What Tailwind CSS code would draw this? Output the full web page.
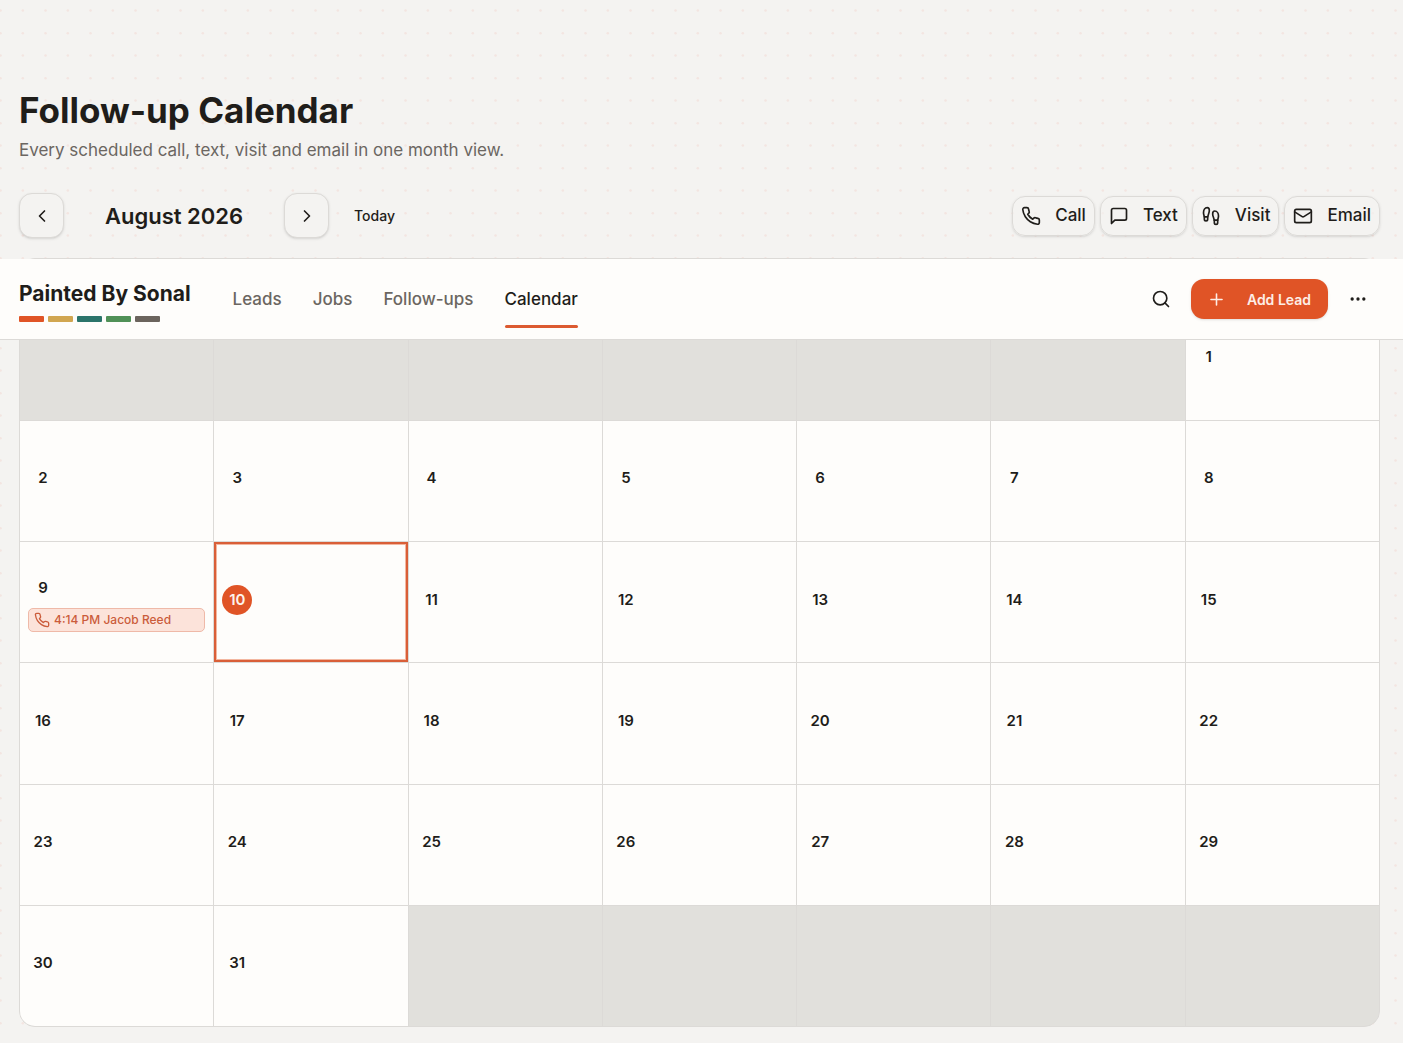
<!DOCTYPE html>
<html lang="en">
<head>
  <meta charset="UTF-8">
  <meta name="viewport" content="width=device-width, initial-scale=1.0">
  <title>Follow-up Calendar</title>
  <script src="https://cdn.jsdelivr.net/npm/@tailwindcss/browser@4"></script>
</head>
<body class="relative min-h-screen bg-[#f4f3f1] font-['Inter',sans-serif] text-[#1f1d1a]">
  <!-- Dotted page background -->
  <svg class="absolute inset-0 -z-10 h-full w-full" aria-hidden="true">
    <defs>
      <pattern id="dots" width="45" height="45" patternUnits="userSpaceOnUse">
        <g fill="#f3e5e1">
          <circle cx="0.5" cy="10.5" r="1.3" />
          <circle cx="22.8" cy="10.5" r="1.3" />
          <circle cx="45.5" cy="10.5" r="1.3" />
          <circle cx="0.5" cy="33.2" r="1.3" />
          <circle cx="22.8" cy="33.2" r="1.3" />
          <circle cx="45.5" cy="33.2" r="1.3" />
        </g>
      </pattern>
    </defs>
    <rect width="100%" height="100%" fill="url(#dots)" />
  </svg>

  <!-- Icon sprite -->
  <svg class="hidden">
    <symbol id="i-phone" viewBox="0 0 24 24"><path d="M22 16.92v3a2 2 0 0 1-2.18 2 19.79 19.79 0 0 1-8.63-3.07 19.5 19.5 0 0 1-6-6 19.79 19.79 0 0 1-3.07-8.67A2 2 0 0 1 4.11 2h3a2 2 0 0 1 2 1.72 12.84 12.84 0 0 0 .7 2.81 2 2 0 0 1-.45 2.11L8.09 9.91a16 16 0 0 0 6 6l1.27-1.27a2 2 0 0 1 2.11-.45 12.84 12.84 0 0 0 2.81.7A2 2 0 0 1 22 16.92z" /></symbol>
    <symbol id="i-text" viewBox="0 0 24 24"><path d="M21 15a2 2 0 0 1-2 2H7l-4 4V5a2 2 0 0 1 2-2h14a2 2 0 0 1 2 2z" /></symbol>
    <symbol id="i-visit" viewBox="0 0 24 24"><path d="M4 16v-2.38C4 11.5 2.97 10.5 3 8c.03-2.72 1.49-6 4.5-6C9.37 2 10 3.8 10 5.5c0 3.11-2 5.66-2 8.68V16a2 2 0 1 1-4 0Z" /><path d="M20 20v-2.38c0-2.12 1.03-3.12 1-5.62-.03-2.72-1.49-6-4.5-6C14.63 6 14 7.8 14 9.5c0 3.11 2 5.66 2 8.68V20a2 2 0 1 0 4 0Z" /><path d="M16 17h4" /><path d="M4 13h4" /></symbol>
    <symbol id="i-mail" viewBox="0 0 24 24"><rect width="20" height="16" x="2" y="4" rx="2" /><path d="m22 7-8.97 5.7a1.94 1.94 0 0 1-2.06 0L2 7" /></symbol>
    <symbol id="i-left" viewBox="0 0 24 24"><path d="m15 18-6-6 6-6" /></symbol>
    <symbol id="i-right" viewBox="0 0 24 24"><path d="m9 18 6-6-6-6" /></symbol>
    <symbol id="i-search" viewBox="0 0 24 24"><circle cx="11" cy="11" r="8" /><path d="m21 21-4.3-4.3" /></symbol>
    <symbol id="i-plus" viewBox="0 0 24 24"><path d="M5 12h14M12 5v14" /></symbol>
    <symbol id="i-more" viewBox="0 0 24 24"><circle cx="12" cy="12" r="1" /><circle cx="19" cy="12" r="1" /><circle cx="5" cy="12" r="1" /></symbol>
  </svg>

  <main class="pt-[88px] pb-4">
    <div class="px-[19px]">
      <h1 class="text-[35px] leading-[44px] font-bold">Follow-up Calendar</h1>
      <p class="mt-1 text-[17px] leading-7 text-[#6b6661]">Every scheduled call, text, visit and email in one month view.</p>
    </div>

    <!-- Month controls -->
    <div class="mt-[29px] flex items-center justify-between pr-[23px] pl-[19px]">
      <div class="flex items-center">
        <button aria-label="Previous month" class="flex size-[45px] items-center justify-center rounded-[13px] border border-[#dcdad7] bg-[#f4f3f1] shadow-sm">
          <svg class="size-5 fill-none stroke-current stroke-2" stroke-linecap="round" stroke-linejoin="round"><use href="#i-left" /></svg>
        </button>
        <h2 class="w-[220px] text-center text-[22px] leading-7 font-semibold">August 2026</h2>
        <button aria-label="Next month" class="flex size-[45px] items-center justify-center rounded-[13px] border border-[#dcdad7] bg-[#f4f3f1] shadow-sm">
          <svg class="size-5 fill-none stroke-current stroke-2" stroke-linecap="round" stroke-linejoin="round"><use href="#i-right" /></svg>
        </button>
        <button class="ml-[9px] px-4 text-[14px] leading-5 font-medium">Today</button>
      </div>
      <div class="flex gap-[5px]">
        <button class="flex h-10 items-center gap-[14px] rounded-[13px] border border-[#dcdad7] bg-[#f4f3f1]/60 px-2 text-[17px] font-medium shadow-sm"><svg class="size-5 fill-none stroke-current stroke-2" stroke-linecap="round" stroke-linejoin="round"><use href="#i-phone" /></svg>Call</button>
        <button class="flex h-10 items-center gap-[14px] rounded-[13px] border border-[#dcdad7] bg-[#f4f3f1]/60 px-2 text-[17px] font-medium shadow-sm"><svg class="size-5 fill-none stroke-current stroke-2" stroke-linecap="round" stroke-linejoin="round"><use href="#i-text" /></svg>Text</button>
        <button class="flex h-10 items-center gap-[14px] rounded-[13px] border border-[#dcdad7] bg-[#f4f3f1]/60 px-2 text-[17px] font-medium shadow-sm"><svg class="size-5 fill-none stroke-current stroke-2" stroke-linecap="round" stroke-linejoin="round"><use href="#i-visit" /></svg>Visit</button>
        <button class="flex h-10 items-center gap-[14px] rounded-[13px] border border-[#dcdad7] bg-[#f4f3f1]/60 px-2 text-[17px] font-medium shadow-sm"><svg class="size-5 fill-none stroke-current stroke-2" stroke-linecap="round" stroke-linejoin="round"><use href="#i-mail" /></svg>Email</button>
      </div>
    </div>

    <div class="relative mt-5">
      <!-- App bar, floats over the top of the calendar -->
      <header class="absolute inset-x-0 top-px z-10 flex h-[81px] items-center border-b border-[#dcdad7] bg-[#fefdfb] pr-[25px] pl-[19px]">
        <a href="#" class="block pt-[3px]">
          <span class="block text-[21px] leading-7 font-bold">Painted By Sonal</span>
          <span class="mt-2 flex gap-1">
            <span class="h-[6px] w-[25px] rounded-[1px] bg-[#e05426]"></span>
            <span class="h-[6px] w-[25px] rounded-[1px] bg-[#d1a650]"></span>
            <span class="h-[6px] w-[25px] rounded-[1px] bg-[#2b746a]"></span>
            <span class="h-[6px] w-[25px] rounded-[1px] bg-[#509157]"></span>
            <span class="h-[6px] w-[25px] rounded-[1px] bg-[#6b645d]"></span>
          </span>
        </a>
        <nav class="ml-[42px] flex gap-[31px] text-[17px] leading-6 font-medium text-[#6b6661]">
          <a href="#" class="pt-[17px] pb-[17px]">Leads</a>
          <a href="#" class="pt-[17px] pb-[17px]">Jobs</a>
          <a href="#" class="pt-[17px] pb-[17px]">Follow-ups</a>
          <a href="#" class="pt-[17px] text-[#1f1d1a]">Calendar<span class="mt-[14px] block h-[3px] rounded-full bg-[#dc5a30]"></span></a>
        </nav>
        <div class="ml-auto flex items-center">
          <button aria-label="Search" class="flex size-10 items-center justify-center"><svg class="size-5 fill-none stroke-current stroke-2" stroke-linecap="round" stroke-linejoin="round"><use href="#i-search" /></svg></button>
          <button class="ml-[10px] flex h-10 items-center gap-[21px] rounded-[13px] bg-[#e05426] pr-[17px] pl-4 text-[14px] font-semibold text-[#fdeee6] shadow-sm"><svg class="size-[19px] fill-none stroke-current stroke-2" stroke-linecap="round" stroke-linejoin="round"><use href="#i-plus" /></svg>Add Lead</button>
          <button aria-label="More" class="ml-[10px] flex size-10 items-center justify-center"><svg class="size-5 fill-none stroke-current stroke-2" stroke-linecap="round" stroke-linejoin="round"><use href="#i-more" /></svg></button>
        </div>
      </header>

      <div class="mr-[23px] ml-[19px] overflow-hidden rounded-[16px] border border-[#dcdad7] bg-[#dcdad7]">
        <div class="h-10 bg-[#fefdfb]"></div>
        <div id="days" class="grid min-h-[727px] auto-rows-fr grid-cols-7 gap-x-px"></div>
      </div>
    </div>
  </main>

  <script>
    const today = 10;
    const firstWeekday = 6;
    const daysInMonth = 31;
    const followUps = { 9: '4:14 PM Jacob Reed' };

    const grid = document.getElementById('days');
    for (let i = 0; i < 42; i++) {
      const day = i - firstWeekday + 1;
      const cell = document.createElement('div');
      if (day < 1 || day > daysInMonth) {
        cell.className = 'border-t border-[#dcdad7] bg-[#e1e0dc]';
        grid.appendChild(cell);
        continue;
      }
      cell.className = 'min-w-0 border-t border-[#dcdad7] bg-[#fefdfb]';
      const ring = day === today ? 'shadow-[inset_0_0_0_2px_#d95f38,inset_0_0_0_3px_#f3b7a0]' : '';
      const badge = day === today ? 'bg-[#e05426] text-[#fdf3ec]' : '';
      const event = followUps[day] ? `
        <button class="flex h-6 w-full items-center gap-1 rounded-[5px] border border-[#efb9a8] bg-[#fce3da] px-[5px] text-[12px] font-medium text-[#cb5c3b]">
          <svg class="size-4 fill-none stroke-current stroke-2" stroke-linecap="round" stroke-linejoin="round"><use href="#i-phone" /></svg>
          ${followUps[day]}
        </button>` : '';
      cell.innerHTML = `
        <div class="flex h-full flex-col justify-center px-2 ${ring}">
          <span class="mb-[5px] flex size-[30px] items-center justify-center rounded-full text-[15px] font-semibold ${badge}">${day}</span>
          ${event}
        </div>`;
      grid.appendChild(cell);
    }
  </script>
</body>
</html>
